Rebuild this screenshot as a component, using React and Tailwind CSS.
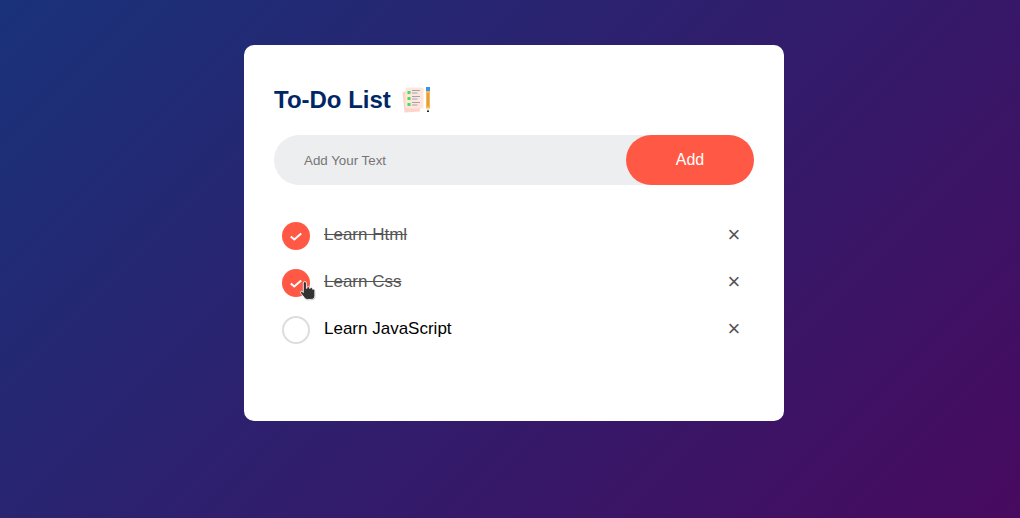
import React, { useState } from 'react';

const initialTasks = [
  { id: 1, text: 'Learn Html', done: true },
  { id: 2, text: 'Learn Css', done: true },
  { id: 3, text: 'Learn JavaScript', done: false },
];

const ChecklistEmoji = () => (
  <svg width="30" height="28" viewBox="0 0 30 28" className="shrink-0">
    <path d="M1.500 6.500L5 5v16h14v4.500L3.500 26.500z" fill="#ffd3c9" />
    <rect x="4.500" y="1.500" width="18" height="21" rx="1.500" fill="#fde7dc" />
    <rect x="6.500" y="5" width="3" height="3" fill="#3fe05a" />
    <rect x="6.500" y="11" width="3" height="3" fill="#3fe05a" />
    <rect x="6.500" y="17" width="3" height="3" fill="#3fe05a" />
    <path d="M11 4.500h8M11 7h5.500M11 10.500h8M11 13h5.500M11 16.500h8M11 19h5.500" stroke="#a79fb3" strokeWidth="1" />
    <rect x="25" y="1" width="4" height="4" fill="#3a97e8" />
    <rect x="25" y="5" width="4" height="17" fill="#f8b752" />
    <rect x="26.500" y="7" width="1" height="13" fill="#c48a33" />
    <path d="M25 22h4l-2 3z" fill="#f6dcb5" />
    <rect x="26" y="24.500" width="2" height="1.500" fill="#222" />
  </svg>
);

const HandCursor = () => (
  <svg width="19" height="21" viewBox="0 0 18 20" className="absolute left-[16px] top-[11px]">
    <path
      d="M5 3a1.500 1.500 0 0 1 3 0v5h.5V7.300a1.300 1.300 0 0 1 2.500 0V8h.5a1.300 1.300 0 0 1 2.500.5V9a1.200 1.200 0 0 1 2 1v5c0 2.200-1.500 3.500-3.500 3.500H9c-1.500 0-2.500-.7-3.300-2L2.500 12.500c-.8-1.300 1-2.500 2-1.300L5 12z"
      fill="#000"
      opacity="0.25"
      transform="translate(0.500 0.800)"
    />
    <path
      d="M5 3a1.500 1.500 0 0 1 3 0v5h.5V7.300a1.300 1.300 0 0 1 2.500 0V8h.5a1.300 1.300 0 0 1 2.500.5V9a1.200 1.200 0 0 1 2 1v5c0 2.200-1.500 3.500-3.500 3.500H9c-1.500 0-2.500-.7-3.300-2L2.500 12.500c-.8-1.300 1-2.500 2-1.300L5 12z"
      fill="#333"
      stroke="#fff"
      strokeWidth="0.800"
    />
  </svg>
);

const TaskRow = ({ task, showCursor }) => (
  <li className="flex items-start h-[47px] pt-3 pl-2">
    <div className="relative shrink-0 w-7 h-7">
      {task.done ? (
        <div className="w-7 h-7 rounded-full bg-[#ff5945] flex items-center justify-center">
          <svg width="14" height="14" viewBox="0 0 14 14" fill="none">
            <path d="M1.800 7.500l3.500 3L12.200 4.500" stroke="#fff" strokeWidth="2" />
          </svg>
        </div>
      ) : (
        <div className="w-7 h-7 rounded-full border-2 border-[#dddddd]" />
      )}
      {showCursor && <HandCursor />}
    </div>
    <span
      className={`ml-[14px] flex-1 text-[17px] leading-[25px] ${
        task.done ? 'text-[#555] line-through' : 'text-black'
      }`}
    >
      {task.text}
    </span>
    <span className="w-10 h-[25px] flex items-center justify-center text-[22px] leading-none text-[#555]">
      ×
    </span>
  </li>
);

export default function App() {
  const [tasks] = useState(initialTasks);

  return (
    <div
      className="w-full h-[518px] pl-[244px] pt-[45px] bg-[linear-gradient(135deg,#19327a,#470a5f)]"
      style={{ fontFamily: '"Liberation Sans", Arial, sans-serif' }}
    >
      <div className="w-[540px] h-[376px] bg-white rounded-[10px] pt-10 px-[30px] pb-[70px]">
        <div className="flex items-center h-[30px] mb-5">
          <h2 className="text-[24px] leading-[30px] font-bold text-[#002765]">To-Do List</h2>
          <span className="ml-[10px]">
            <ChecklistEmoji />
          </span>
        </div>

        <div className="flex items-center h-[50px] bg-[#edeef0] rounded-[30px] mb-[25px]">
          <input
            type="text"
            placeholder="Add Your Text"
            className="flex-1 min-w-0 h-full pl-[30px] bg-transparent outline-none text-[13.333px] placeholder:text-[#757575]"
          />
          <button className="w-32 h-full bg-[#ff5945] text-white text-base rounded-[40px]">Add</button>
        </div>

        <ul>
          {tasks.map((task) => (
            <TaskRow key={task.id} task={task} showCursor={task.id === 2} />
          ))}
        </ul>
      </div>
    </div>
  );
}
